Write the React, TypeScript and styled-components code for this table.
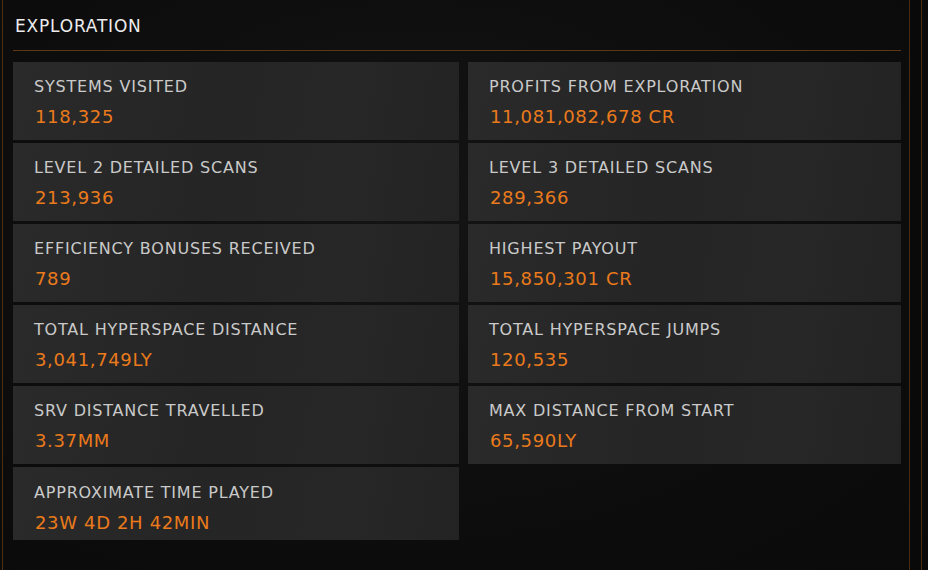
import styled, { createGlobalStyle } from 'styled-components';

const GlobalStyle = createGlobalStyle`
  html, body {
    margin: 0;
    padding: 0;
    background: #0c0c0d;
  }
  * {
    box-sizing: border-box;
  }
`;

type Stat = { label: string; value: string };

const stats: Stat[] = [
  { label: 'SYSTEMS VISITED', value: '118,325' },
  { label: 'PROFITS FROM EXPLORATION', value: '11,081,082,678 CR' },
  { label: 'LEVEL 2 DETAILED SCANS', value: '213,936' },
  { label: 'LEVEL 3 DETAILED SCANS', value: '289,366' },
  { label: 'EFFICIENCY BONUSES RECEIVED', value: '789' },
  { label: 'HIGHEST PAYOUT', value: '15,850,301 CR' },
  { label: 'TOTAL HYPERSPACE DISTANCE', value: '3,041,749LY' },
  { label: 'TOTAL HYPERSPACE JUMPS', value: '120,535' },
  { label: 'SRV DISTANCE TRAVELLED', value: '3.37MM' },
  { label: 'MAX DISTANCE FROM START', value: '65,590LY' },
  { label: 'APPROXIMATE TIME PLAYED', value: '23W 4D 2H 42MIN' },
];

function App() {
  return (
    <>
      <GlobalStyle />
      <Page>
        <Panel>
          <Header>
            <Title>EXPLORATION</Title>
          </Header>
          <StatGrid>
            {stats.map((s, i) => (
              <StatCard key={s.label} $last={i === stats.length - 1}>
                <Label>{s.label}</Label>
                <Value>{s.value}</Value>
              </StatCard>
            ))}
          </StatGrid>
        </Panel>
        <RightRail />
      </Page>
    </>
  );
}

export default App;

const Page = styled.div`
  display: flex;
  width: 928px;
  height: 570px;
  padding-left: 2px;
  overflow: hidden;
  background: radial-gradient(ellipse at 45% 40%, #141415 0%, #0d0d0e 60%, #0a0a0a 100%);
  font-family: 'DejaVu Sans', 'Liberation Sans', sans-serif;
`;

const Panel = styled.div`
  flex: 1;
  display: flex;
  flex-direction: column;
  padding: 0 8px 0 10px;
  border-left: 1px solid #4f2f12;
`;

const Header = styled.div`
  display: flex;
  align-items: center;
  height: 51px;
  padding-left: 2px;
  padding-top: 1px;
  border-bottom: 1px solid #5e3714;
`;

const Title = styled.h1`
  margin: 0;
  font-size: 17px;
  font-weight: normal;
  letter-spacing: 0.8px;
  color: #ececec;
`;

const StatGrid = styled.div`
  display: grid;
  grid-template-columns: 446px 433px;
  column-gap: 9px;
  row-gap: 3px;
  margin-top: 11px;
`;

const StatCard = styled.div<{ $last?: boolean }>`
  display: flex;
  flex-direction: column;
  gap: 9px;
  height: ${(p) => (p.$last ? '73px' : '78px')};
  padding: ${(p) => (p.$last ? '16px' : '15px')} 21px 0;
  background: linear-gradient(100deg, #2a2a2a 0%, #252525 45%, #272727 75%, #232323 100%);
`;

const Label = styled.div`
  font-size: 16px;
  letter-spacing: 0.8px;
  color: #cacaca;
  line-height: 20px;
`;

const Value = styled.div`
  font-size: 18px;
  letter-spacing: 0.65px;
  color: #ea7a1c;
  line-height: 22px;
  padding-left: 1px;
`;

const RightRail = styled.div`
  width: 13px;
  margin-right: 6px;
  border-left: 1px solid #4a2c12;
  border-right: 1px solid #4a2c12;
  background: #090909;
`;
